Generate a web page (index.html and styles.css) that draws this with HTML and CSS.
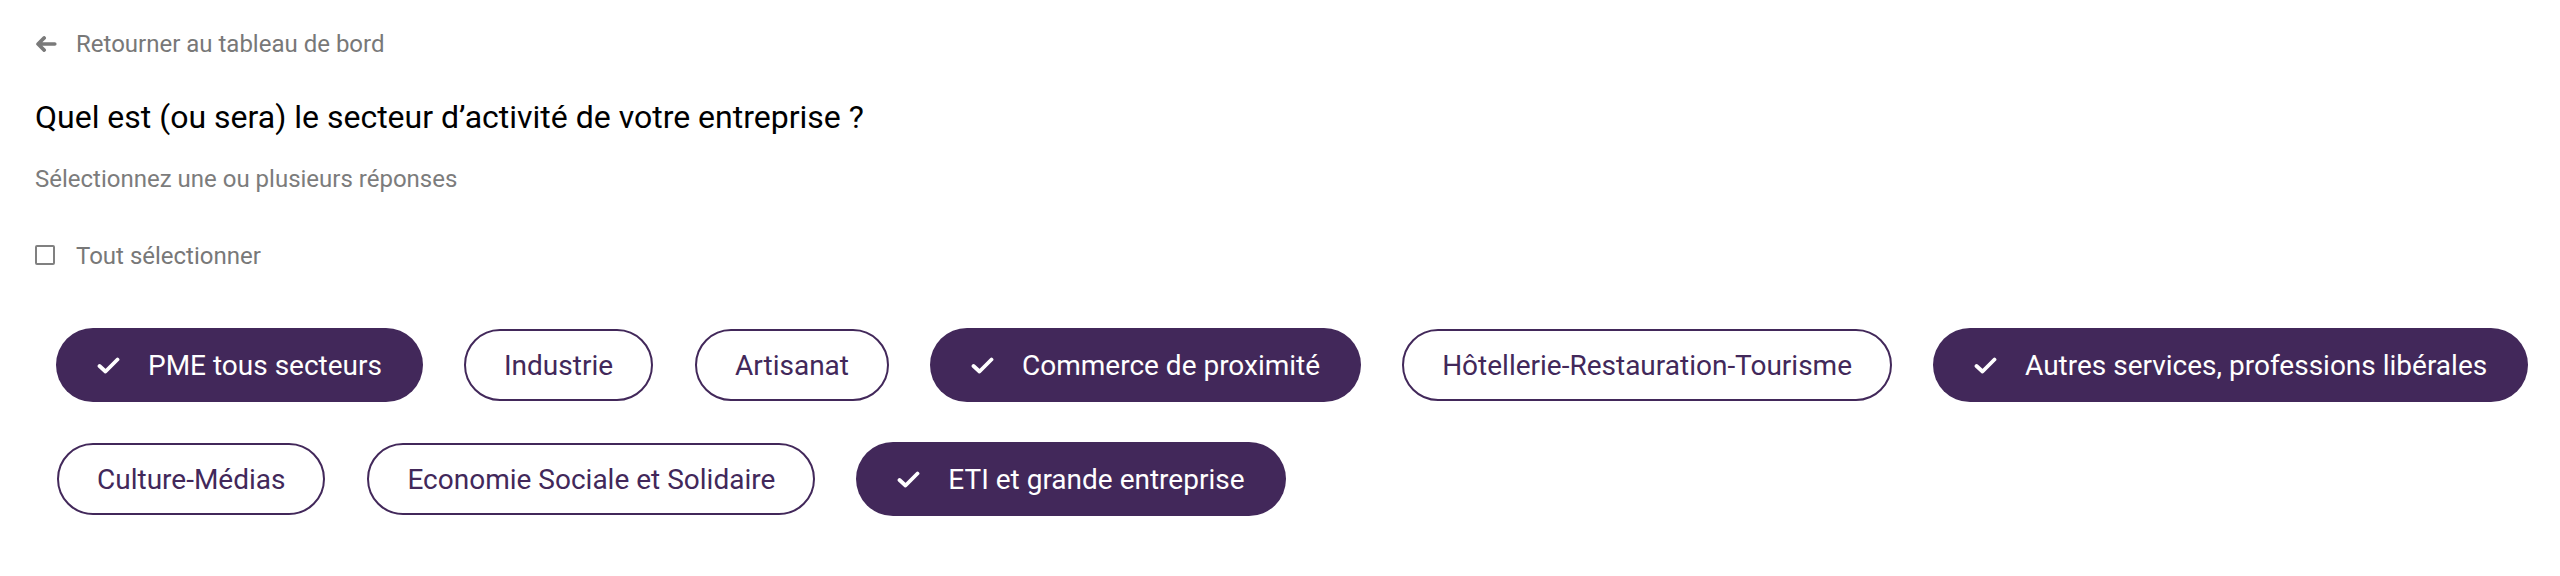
FILE: index.html
```html
<!DOCTYPE html>
<html lang="fr">
<head>
<meta charset="utf-8">
<title>Secteur d'activité</title>
<link rel="stylesheet" href="styles.css">
</head>
<body>
<main class="page">
  <a class="back" href="#">
    <svg class="back-icon" width="22" height="16" viewBox="0 0 22 16" aria-hidden="true">
      <path d="M19.8 8H3.2M9.2 1.9L3 8L9.2 14.1" fill="none" stroke="currentColor" stroke-width="3.6" stroke-linecap="round" stroke-linejoin="round"/>
    </svg>
    <span>Retourner au tableau de bord</span>
  </a>
  <h1 class="question">Quel est (ou sera) le secteur d’activité de votre entreprise ?</h1>
  <p class="hint">Sélectionnez une ou plusieurs réponses</p>
  <label class="select-all">
    <span class="box"></span>
    <span>Tout sélectionner</span>
  </label>
  <ul class="chips">
    <li class="chip selected"><svg class="check" width="23" height="17" viewBox="0 0 23 17" aria-hidden="true"><path d="M2.5 9L8.5 14.5L20.5 2.5" fill="none" stroke="currentColor" stroke-width="3.8" stroke-linecap="round" stroke-linejoin="round"/></svg><span>PME tous secteurs</span></li>
    <li class="chip">Industrie</li>
    <li class="chip">Artisanat</li>
    <li class="chip selected"><svg class="check" width="23" height="17" viewBox="0 0 23 17" aria-hidden="true"><path d="M2.5 9L8.5 14.5L20.5 2.5" fill="none" stroke="currentColor" stroke-width="3.8" stroke-linecap="round" stroke-linejoin="round"/></svg><span>Commerce de proximité</span></li>
    <li class="chip">Hôtellerie-Restauration-Tourisme</li>
    <li class="chip selected"><svg class="check" width="23" height="17" viewBox="0 0 23 17" aria-hidden="true"><path d="M2.5 9L8.5 14.5L20.5 2.5" fill="none" stroke="currentColor" stroke-width="3.8" stroke-linecap="round" stroke-linejoin="round"/></svg><span>Autres services, professions libérales</span></li>
    <li class="chip">Culture-Médias</li>
    <li class="chip">Economie Sociale et Solidaire</li>
    <li class="chip selected"><svg class="check" width="23" height="17" viewBox="0 0 23 17" aria-hidden="true"><path d="M2.5 9L8.5 14.5L20.5 2.5" fill="none" stroke="currentColor" stroke-width="3.8" stroke-linecap="round" stroke-linejoin="round"/></svg><span>ETI et grande entreprise</span></li>
  </ul>
</main>
</body>
</html>
```

FILE: styles.css
```css
* {
  box-sizing: border-box;
}

html, body {
  margin: 0;
  background: #ffffff;
}

body {
  font-family: Roboto, "Liberation Sans", Arial, sans-serif;
  color: #000;
}

.page {
  padding: 30px 0 0 35px;
}

.back {
  display: flex;
  align-items: center;
  gap: 19px;
  font-size: 24px;
  line-height: 28px;
  color: #787878;
  text-decoration: none;
}

.back-icon {
  display: block;
  color: #7a7a7a;
}

.question {
  margin: 40px 0 0;
  font-size: 32px;
  font-weight: 400;
  line-height: 38px;
  color: #000;
}

.hint {
  margin: 29px 0 0;
  font-size: 24px;
  line-height: 28px;
  color: #7c7c7c;
}

.select-all {
  display: flex;
  align-items: center;
  gap: 21px;
  margin-top: 49px;
  font-size: 24px;
  line-height: 28px;
  color: #787878;
}

.box {
  width: 20px;
  height: 20px;
  border: 2px solid #808080;
  border-radius: 2px;
  margin-top: -2px;
}

.chips {
  list-style: none;
  display: flex;
  flex-wrap: wrap;
  align-items: center;
  margin: 38px 0 0 1px;
  padding: 0;
}

.chip {
  display: flex;
  align-items: center;
  height: 72px;
  margin: 20px 21px;
  padding: 0 38px;
  border: 2px solid #42285a;
  border-radius: 36px;
  background: #fff;
  color: #42285a;
  font-size: 28px;
  line-height: 33px;
  white-space: nowrap;
}

.chip.selected {
  height: 74px;
  margin: 20px;
  padding: 0 41px;
  gap: 28px;
  border: none;
  border-radius: 37px;
  background: #42285a;
  color: #fff;
}

.check {
  display: block;
  flex: none;
}
```
